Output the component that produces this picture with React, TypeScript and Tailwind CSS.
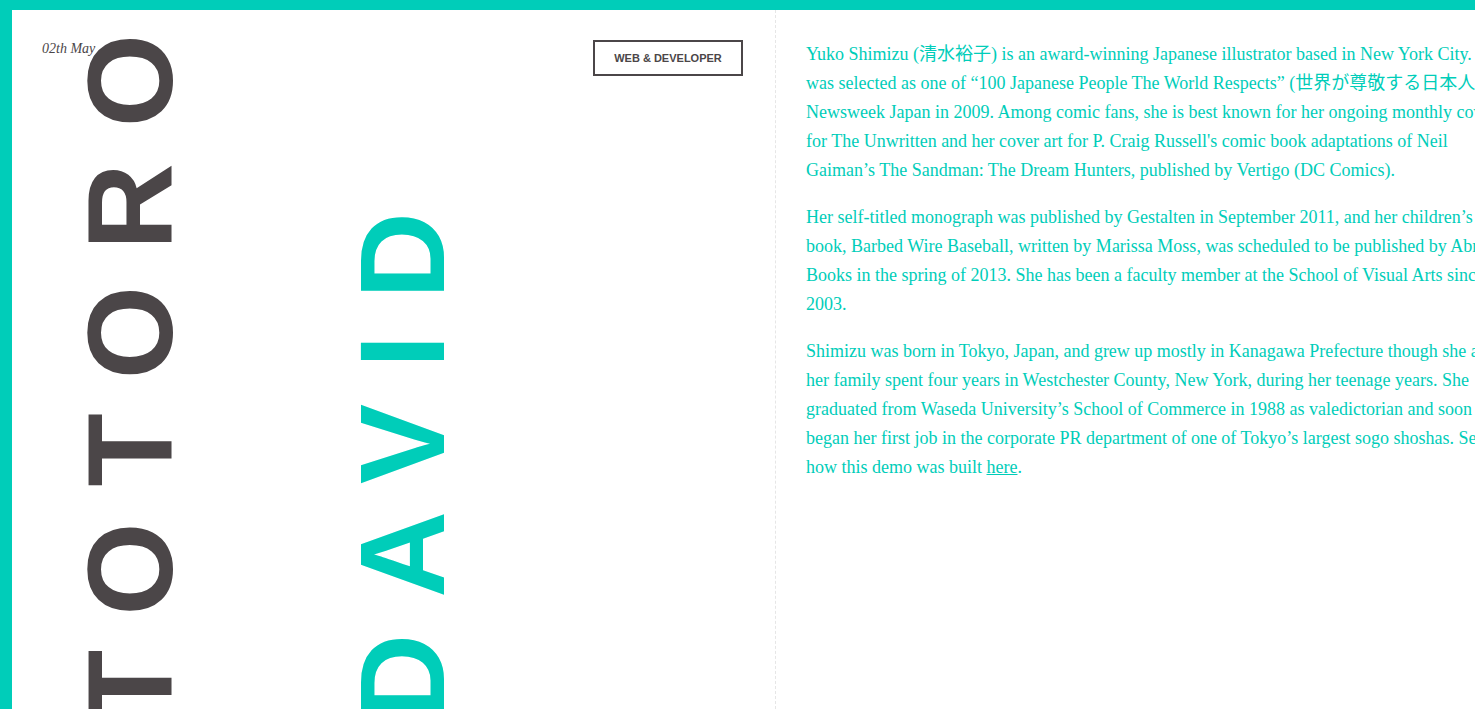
const paragraphs: string[][] = [
  [
    "Yuko Shimizu (清水裕子) is an award-winning Japanese illustrator based in New York City. She",
    "was selected as one of “100 Japanese People The World Respects” (世界が尊敬する日本人100人) by",
    "Newsweek Japan in 2009. Among comic fans, she is best known for her ongoing monthly covers",
    "for The Unwritten and her cover art for P. Craig Russell's comic book adaptations of Neil",
    "Gaiman’s The Sandman: The Dream Hunters, published by Vertigo (DC Comics).",
  ],
  [
    "Her self-titled monograph was published by Gestalten in September 2011, and her children’s",
    "book, Barbed Wire Baseball, written by Marissa Moss, was scheduled to be published by Abrams",
    "Books in the spring of 2013. She has been a faculty member at the School of Visual Arts since",
    "2003.",
  ],
  [
    "Shimizu was born in Tokyo, Japan, and grew up mostly in Kanagawa Prefecture though she and",
    "her family spent four years in Westchester County, New York, during her teenage years. She",
    "graduated from Waseda University’s School of Commerce in 1988 as valedictorian and soon",
    "began her first job in the corporate PR department of one of Tokyo’s largest sogo shoshas. See",
  ],
];

export default function App() {
  return (
    <div className="flex h-[709px] overflow-hidden border-t-[10px] border-l-[12px] border-[#00cdb9] bg-white">
      {/* Left panel */}
      <div className="flex w-[763px] shrink-0 flex-col">
        <div className="flex items-start justify-between pt-[30px] pr-[32px] pl-[30px]">
          <span className="mt-[1px] font-['Liberation_Serif',serif] text-[14px] leading-[16px] text-[#4b4648] italic">
            02th May
          </span>
          <span className="flex h-[36px] w-[150px] items-center justify-center border-2 border-[#4b4648] font-['Liberation_Sans',sans-serif] text-[11px] font-bold text-[#4b4648]">
            WEB &amp; DEVELOPER
          </span>
        </div>

        {/* Vertical words */}
        <div className="-mt-[78px] flex items-start gap-[152px] pl-[58px]">
          <div className="rotate-180 font-['Liberation_Sans',sans-serif] text-[120px] leading-none font-bold tracking-[36px] whitespace-nowrap text-[#4b4648] [writing-mode:vertical-rl]">
            TOTORO
          </div>
          <div className="mt-[178px] rotate-180 font-['Liberation_Sans',sans-serif] text-[120px] leading-none font-bold tracking-[36px] whitespace-nowrap text-[#00cdb9] [writing-mode:vertical-rl]">
            DAVID
          </div>
        </div>
      </div>

      {/* Right panel */}
      <div className="w-[741px] shrink-0 border-l border-dashed border-[#e6e6e6] pt-[30px] pl-[30px]">
        <div className="font-['Liberation_Serif','Noto_Sans_CJK_JP',serif] text-[18px] leading-[29px] whitespace-nowrap text-[#00cdb9]">
          {paragraphs.map((lines, i) => (
            <p key={i} className="mb-[18px]">
              {lines.map((line, j) => (
                <span key={j} className="block">
                  {line}
                </span>
              ))}
              {i === 2 && (
                <span className="block">
                  how this demo was built{" "}
                  <a href="#" className="underline">
                    here
                  </a>
                  .
                </span>
              )}
            </p>
          ))}
        </div>
      </div>
    </div>
  );
}
